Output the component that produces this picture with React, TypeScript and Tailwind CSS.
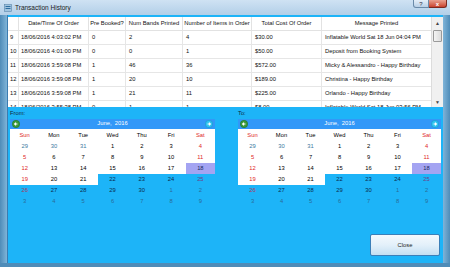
import React from "react";

const rows = [
  { n: "9", date: "18/06/2016 4:03:02 PM", pre: "0", bands: "2", items: "4", cost: "$30.00", msg: "Inflatable World Sat 18 Jun 04:04 PM" },
  { n: "10", date: "18/06/2016 4:01:00 PM", pre: "0", bands: "0", items: "1", cost: "$50.00", msg: "Deposit from Booking System" },
  { n: "11", date: "18/06/2016 3:59:08 PM", pre: "1", bands: "46", items: "36", cost: "$572.00", msg: "Micky & Alessandro - Happy Birthday" },
  { n: "12", date: "18/06/2016 3:59:08 PM", pre: "1", bands: "20", items: "10", cost: "$189.00", msg: "Christina - Happy Birthday" },
  { n: "13", date: "18/06/2016 3:59:08 PM", pre: "1", bands: "21", items: "11", cost: "$225.00", msg: "Orlando - Happy Birthday" },
  { n: "14", date: "18/06/2016 3:55:38 PM", pre: "0", bands: "1", items: "1", cost: "$8.00", msg: "Inflatable World Sat 18 Jun 03:56 PM" },
];

const cols = [
  { key: "n", title: "", w: "w-[11px]", align: "pl-[2px]" },
  { key: "date", title: "Date/Time Of Order", w: "w-[70px]", align: "pl-[2px]" },
  { key: "pre", title: "Pre Booked?", w: "w-[37px]", align: "pl-[3px]" },
  { key: "bands", title: "Num Bands Printed", w: "w-[57px]", align: "pl-[3px]" },
  { key: "items", title: "Number of Items in Order", w: "w-[69px]", align: "pl-[3px]" },
  { key: "cost", title: "Total Cost Of Order", w: "w-[70px]", align: "pl-[3px]" },
  { key: "msg", title: "Message Printed", w: "w-[110px]", align: "pl-[3px]" },
] as const;

type Day = { d: string; c: string; bg: string };

const prev = "text-[#3b7aa0]";
const red = "text-[#e02828]";
const blk = "text-black";
const dark = "text-[#0b2c4e]";
const next = "text-[#2a6c98]";

function weeks(): Day[][] {
  const W = "bg-white";
  const N = "";
  return [
    [
      { d: "29", c: prev, bg: W }, { d: "30", c: prev, bg: W }, { d: "31", c: prev, bg: W },
      { d: "1", c: blk, bg: W }, { d: "2", c: blk, bg: W }, { d: "3", c: blk, bg: W }, { d: "4", c: red, bg: W },
    ],
    [
      { d: "5", c: red, bg: W }, { d: "6", c: blk, bg: W }, { d: "7", c: blk, bg: W },
      { d: "8", c: blk, bg: W }, { d: "9", c: blk, bg: W }, { d: "10", c: blk, bg: W }, { d: "11", c: red, bg: W },
    ],
    [
      { d: "12", c: red, bg: W }, { d: "13", c: blk, bg: W }, { d: "14", c: blk, bg: W },
      { d: "15", c: blk, bg: W }, { d: "16", c: blk, bg: W }, { d: "17", c: blk, bg: W }, { d: "18", c: "text-[#1a2a60]", bg: "bg-[#a4a4f2]" },
    ],
    [
      { d: "19", c: red, bg: W }, { d: "20", c: blk, bg: W }, { d: "21", c: blk, bg: W },
      { d: "22", c: dark, bg: N }, { d: "23", c: dark, bg: N }, { d: "24", c: dark, bg: N }, { d: "25", c: "text-[#6b3f8c]", bg: N },
    ],
    [
      { d: "26", c: "text-[#a8385a]", bg: N }, { d: "27", c: dark, bg: N }, { d: "28", c: dark, bg: N },
      { d: "29", c: dark, bg: N }, { d: "30", c: dark, bg: N }, { d: "1", c: next, bg: N }, { d: "2", c: next, bg: N },
    ],
    [
      { d: "3", c: next, bg: N }, { d: "4", c: next, bg: N }, { d: "5", c: next, bg: N },
      { d: "6", c: next, bg: N }, { d: "7", c: next, bg: N }, { d: "8", c: next, bg: N }, { d: "9", c: next, bg: N },
    ],
  ];
}

function Arrow({ left }: { left?: boolean }) {
  return (
    <svg width="8" height="8" viewBox="0 0 10 10">
      <circle cx="5" cy="5" r="4.6" fill={left ? "#3a9a3a" : "#2fc4f0"} stroke={left ? "#1e6a1e" : "#1a8cc0"} strokeWidth="0.6" />
      {left ? (
        <path d="M6.8 5H3.4M5 3.2L3.2 5L5 6.8" stroke="white" strokeWidth="1.3" fill="none" />
      ) : (
        <path d="M3.2 5H6.6M5 3.2L6.8 5L5 6.8" stroke="white" strokeWidth="1.3" fill="none" />
      )}
    </svg>
  );
}

function Calendar({ w }: { w: string }) {
  const names = ["Sun", "Mon", "Tue", "Wed", "Thu", "Fri", "Sat"];
  return (
    <div className={`${w} flex flex-col`}>
      <div className="h-[10px] bg-[#3298f8] flex items-center justify-between px-[2px]">
        <Arrow left />
        <span className="text-white text-[5.8px] leading-none">June,&nbsp;&nbsp;2016</span>
        <Arrow />
      </div>
      <div className="grid grid-cols-7 h-[12px] bg-white">
        {names.map((n, i) => (
          <div key={n} className={`flex items-center justify-center text-[5.8px] ${i === 0 || i === 6 ? red : blk}`}>{n}</div>
        ))}
      </div>
      {weeks().map((wk, r) => (
        <div key={r} className="grid grid-cols-7 h-[11px]">
          {wk.map((d, i) => (
            <div key={i} className={`flex items-center justify-center text-[5.8px] ${d.c} ${d.bg}`}>{d.d}</div>
          ))}
        </div>
      ))}
    </div>
  );
}

export default function App() {
  return (
    <div className="w-[450px] h-[267px] overflow-hidden flex flex-col bg-[#5b9cc8] select-none" style={{ fontFamily: "'Liberation Sans', Arial, sans-serif" }}>
      {/* Title bar */}
      <div className="h-[15px] flex items-start bg-gradient-to-b from-[#cfe2f3] to-[#b2cfe8]">
        <div className="flex items-center gap-[3px] pl-[4px] h-[15px]">
          <svg width="8" height="8" viewBox="0 0 8 8">
            <rect x="0.5" y="0.5" width="7" height="7" fill="#9fc4e0" stroke="#5a86aa" strokeWidth="0.6" />
            <rect x="1.5" y="2" width="5" height="1" fill="#2e6ea0" />
            <rect x="1.5" y="4" width="5" height="1" fill="#2e6ea0" />
          </svg>
          <span className="text-[6.5px] text-[#1b1b1b]">Transaction History</span>
        </div>
        <div className="ml-auto mr-[3px] flex">
          <div className="w-[16px] h-[8px] rounded-bl-[3px] border border-t-0 border-[#6a8aa8] bg-gradient-to-b from-[#e4eef8] to-[#b9d0e6] flex items-center justify-center text-[6px] leading-none text-[#334]">?</div>
          <div className="w-[18px] h-[8px] rounded-br-[3px] border border-t-0 border-l-0 border-[#7a2a20] bg-gradient-to-b from-[#e8a090] to-[#c8402c] flex items-center justify-center text-[6px] leading-none text-white font-bold">x</div>
        </div>
      </div>

      <div className="flex-1 flex">
        <div className="w-[7px] bg-gradient-to-r from-[#4f8cb8] to-[#7fb4d8]" />
        <div className="w-[436px] bg-[#1db4f8] flex flex-col border-l border-[#3b7cb0]">
          {/* Table */}
          <div className="mt-[2px] h-[90px] bg-white flex overflow-hidden">
            <div className="w-[423px] flex flex-col text-[5.8px] text-[#111]">
              <div className="h-[14px] flex shrink-0 border-b border-[#e2e2e2]">
                {cols.map((c) => (
                  <div key={c.key} className={`${c.w} shrink-0 flex items-center justify-center border-r border-[#e2e2e2] whitespace-nowrap`}>{c.title}</div>
                ))}
              </div>
              {rows.map((r) => (
                <div key={r.n} className="h-[14px] flex shrink-0 border-b border-[#e6e6e6]">
                  {cols.map((c) => (
                    <div key={c.key} className={`${c.w} ${c.align} shrink-0 flex items-center border-r border-[#e6e6e6] whitespace-nowrap overflow-hidden`}>
                      {r[c.key as keyof typeof r]}
                    </div>
                  ))}
                </div>
              ))}
            </div>
            <div className="w-[12px] flex flex-col bg-[#f0f0f0] border-l border-[#dcdcdc]">
              <div className="h-[13px] flex items-center justify-center text-[5px] text-[#444]">▲</div>
              <div className="mx-[1px] h-[12px] bg-gradient-to-r from-[#f4f4f4] to-[#dcdcdc] border border-[#9a9a9a] rounded-[1px]" />
              <div className="flex-1" />
              <div className="h-[9px] flex items-center justify-center text-[5px] text-[#444]">▼</div>
            </div>
          </div>

          {/* Labels */}
          <div className="flex h-[12px] items-center text-[5.8px] text-[#102a40]">
            <span className="pl-[2px] w-[230px]">From:</span>
            <span>To:</span>
          </div>

          {/* Calendars */}
          <div className="flex pl-[2px]">
            <Calendar w="w-[205px]" />
            <div className="w-[23px]" />
            <Calendar w="w-[203px]" />
          </div>

          <div className="flex justify-end pr-[3px] mt-[27px]">
            <button className="w-[70px] h-[22px] border border-[#3b7fb8] rounded-[2px] bg-gradient-to-b from-[#f4f9fd] via-[#e3f0fa] to-[#c4dff2] text-[5.8px] text-[#222]">Close</button>
          </div>
        </div>
        <div className="w-[7px] bg-gradient-to-r from-[#7fb4d8] to-[#4f8cb8]" />
      </div>
      <div className="h-[4px] bg-[#4f8cb8]" />
    </div>
  );
}
